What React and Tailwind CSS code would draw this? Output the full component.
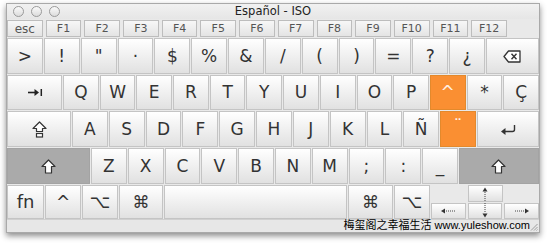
import clsx from 'clsx';

const labelFont = { fontFamily: '"DejaVu Sans", "Liberation Sans", sans-serif' };

const tones = {
	plain: 'border-[#c4c4c4] bg-linear-to-b from-white to-[#e1e1e1] text-[#333]',
	orange: 'border-[#e3892c] bg-[#fa8f32] text-[#fff1e4]',
	gray: 'border-[#a3a3a3] bg-[#aaaaaa] text-[#333]',
};

function Key({ children, className = '', tone = 'plain' }) {
	return (
		<div
			className={clsx(
				'flex items-center justify-center border text-[17px] leading-none',
				tones[tone],
				className
			)}
		>
			{children}
		</div>
	);
}

function DeleteIcon() {
	return (
		<svg width="18" height="13" viewBox="0 0 18 13">
			<path d="M5.5 1 H17 V12 H5.5 L1 6.5 Z" fill="white" stroke="#333" strokeWidth="1.3" strokeLinejoin="round" />
			<path d="M8.5 3.8 L13.5 9.2 M13.5 3.8 L8.5 9.2" stroke="#333" strokeWidth="1.4" />
		</svg>
	);
}

function TabIcon() {
	return (
		<svg width="16" height="9" viewBox="0 0 16 9">
			<path d="M1 4.5 H10" stroke="#222" strokeWidth="1.6" />
			<path d="M7.5 1 L12 4.5 L7.5 8 Z" fill="#222" />
			<path d="M14.3 1 V8" stroke="#222" strokeWidth="1.5" />
		</svg>
	);
}

function CapsIcon() {
	return (
		<svg width="15" height="17" viewBox="0 0 15 17">
			<path d="M7.5 1 L14 7.5 H10.5 V10.5 H4.5 V7.5 H1 Z" fill="white" stroke="#333" strokeWidth="1.2" strokeLinejoin="round" />
			<rect x="4.5" y="12.5" width="6" height="3.5" fill="white" stroke="#333" strokeWidth="1.2" />
		</svg>
	);
}

function ShiftIcon() {
	return (
		<svg width="15" height="15" viewBox="0 0 15 15">
			<path d="M7.5 1 L14 7.5 H10.5 V14 H4.5 V7.5 H1 Z" fill="white" stroke="#333" strokeWidth="1.2" strokeLinejoin="round" />
		</svg>
	);
}

function ReturnIcon() {
	return (
		<svg width="16" height="11" viewBox="0 0 16 11">
			<path d="M14.5 1 V5.5 Q14.5 7.5 12.5 7.5 H4" fill="none" stroke="#333" strokeWidth="1.4" />
			<path d="M1 7.5 L5.5 4 L5.5 11 Z" fill="#333" />
		</svg>
	);
}

function HArrow({ dir }) {
	return (
		<svg width="16" height="6" viewBox="0 0 16 6">
			{dir === 'left' ? (
				<>
					<path d="M1 3 L5 0.5 L5 5.5 Z" fill="#333" />
					<path d="M6 3 H15" stroke="#444" strokeWidth="1" strokeDasharray="1 1" />
				</>
			) : (
				<>
					<path d="M15 3 L11 0.5 L11 5.5 Z" fill="#333" />
					<path d="M1 3 H10" stroke="#444" strokeWidth="1" strokeDasharray="1 1" />
				</>
			)}
		</svg>
	);
}

function FKey({ children, className = '' }) {
	return (
		<div
			className={clsx(
				'flex w-[35.7px] items-center justify-center border border-[#bdbdbd] bg-linear-to-b from-[#f7f7f7] to-[#e4e4e4] text-[#555] leading-none',
				className
			)}
		>
			{children}
		</div>
	);
}

export default function App() {
	const row1 = ['>', '!', '"', '·', '$', '%', '&', '/', '(', ')', '=', '?', '¿'];
	const row2 = ['Q', 'W', 'E', 'R', 'T', 'Y', 'U', 'I', 'O', 'P'];
	const row3 = ['A', 'S', 'D', 'F', 'G', 'H', 'J', 'K', 'L', 'Ñ'];
	const row4 = ['Z', 'X', 'C', 'V', 'B', 'N', 'M', ';', ':', '_'];
	const fkeys = ['F1', 'F2', 'F3', 'F4', 'F5', 'F6', 'F7', 'F8', 'F9', 'F10', 'F11', 'F12'];

	return (
		<div className="h-[245px] w-[548px] bg-white pl-[6px] pt-[3px]" style={labelFont}>
			<div className="flex h-[230px] w-[534px] flex-col border border-[#a9a9a9] bg-[#e9e9e9] shadow-[0_3px_6px_rgba(0,0,0,0.45)]">
				{/* title bar */}
				<div className="relative flex h-[15px] items-center justify-center bg-linear-to-b from-[#f1f1f1] to-[#e6e6e6]">
					<div className="absolute left-[6px] top-[2px] flex gap-[7px]">
						<div className="h-[11px] w-[11px] rounded-full border border-[#9a9a9a] bg-linear-to-b from-[#fafafa] to-[#dcdcdc]" />
						<div className="h-[11px] w-[11px] rounded-full border border-[#9a9a9a] bg-linear-to-b from-[#fafafa] to-[#dcdcdc]" />
						<div className="h-[11px] w-[11px] rounded-full border border-[#9a9a9a] bg-linear-to-b from-[#fafafa] to-[#dcdcdc]" />
					</div>
					<span className="text-[11.5px] text-[#222] leading-none">Español - ISO</span>
				</div>

				{/* function row */}
				<div className="mt-[1px] flex h-[17px] gap-[3px]">
					<FKey className="text-[12px]">esc</FKey>
					{fkeys.map((f) => (
						<FKey key={f} className="text-[11px]">{f}</FKey>
					))}
				</div>

				<div className="mt-[1px] flex flex-col gap-[1px]">
					{/* number row */}
					<div className="flex h-[36px] gap-[1px]">
						{row1.map((k) => (
							<Key key={k} className="flex-1">{k}</Key>
						))}
						<Key className="w-[53px]"><DeleteIcon /></Key>
					</div>

					{/* Q row */}
					<div className="flex h-[35px] gap-[1px]">
						<Key className="w-[55px]"><TabIcon /></Key>
						{row2.map((k) => (
							<Key key={k} className="flex-1">{k}</Key>
						))}
						<Key tone="orange" className="flex-1 text-[15px]">^</Key>
						<Key className="flex-1">*</Key>
						<Key className="flex-1">Ç</Key>
					</div>

					{/* A row */}
					<div className="flex h-[36px] gap-[1px]">
						<Key className="w-[64px]"><CapsIcon /></Key>
						{row3.map((k) => (
							<Key key={k} className="flex-1">{k}</Key>
						))}
						<Key tone="orange" className="flex-1 pb-[6px] text-[12px]">¨</Key>
						<Key className="w-[62px]"><ReturnIcon /></Key>
					</div>

					{/* Z row */}
					<div className="flex h-[36px] gap-[1px]">
						<Key tone="gray" className="w-[83px]"><ShiftIcon /></Key>
						{row4.map((k) => (
							<Key key={k} className="flex-1">{k}</Key>
						))}
						<Key tone="gray" className="w-[80px]"><ShiftIcon /></Key>
					</div>

					{/* bottom row */}
					<div className="flex h-[34px] gap-[1px]">
						<Key className="w-[37px] text-[18px]">fn</Key>
						<Key className="w-[36px] text-[15px]">^</Key>
						<Key className="w-[36px] text-[18px]">⌥</Key>
						<Key className="w-[44px] text-[17px]">⌘</Key>
						<Key className="flex-1" />
						<Key className="w-[45px] text-[17px]">⌘</Key>
						<Key className="w-[36px] text-[18px]">⌥</Key>
						<div className="flex w-[108px] flex-col gap-[1px]">
							<div className="flex h-[17px] justify-center">
								<Key className="w-[35px]">
									<svg width="6" height="15" viewBox="0 0 6 15" className="mt-[2px]">
										<path d="M3 0.5 L5.5 4.5 L0.5 4.5 Z" fill="#333" />
										<path d="M3 5 V15" stroke="#444" strokeWidth="1" strokeDasharray="1 1" />
									</svg>
								</Key>
							</div>
							<div className="flex h-[16px] gap-[2px]">
								<Key className="flex-1"><HArrow dir="left" /></Key>
								<Key className="flex-1">
									<svg width="6" height="15" viewBox="0 0 6 15" className="mb-[2px]">
										<path d="M3 0 V10" stroke="#444" strokeWidth="1" strokeDasharray="1 1" />
										<path d="M3 14.5 L5.5 10.5 L0.5 10.5 Z" fill="#333" />
									</svg>
								</Key>
								<Key className="flex-1"><HArrow dir="right" /></Key>
							</div>
						</div>
					</div>
				</div>

				{/* status strip */}
				<div className="relative flex flex-1 items-center justify-end border-t border-[#d0d0d0] bg-[#e7e7e7] pr-[9px]">
					<span
						className="-mt-[2px] text-[11px] text-black leading-none"
						style={{ fontFamily: '"Liberation Sans", "Noto Sans CJK SC", sans-serif' }}
					>
						梅玺阁之幸福生活 www.yuleshow.com
					</span>
					<svg width="8" height="8" viewBox="0 0 8 8" className="absolute bottom-[1px] right-[1px]">
						<path d="M7.5 1 L1 7.5 M7.5 4 L4 7.5 M7.5 6.5 L6.5 7.5" stroke="#8a8a8a" strokeWidth="0.8" />
					</svg>
				</div>
			</div>
		</div>
	);
}
